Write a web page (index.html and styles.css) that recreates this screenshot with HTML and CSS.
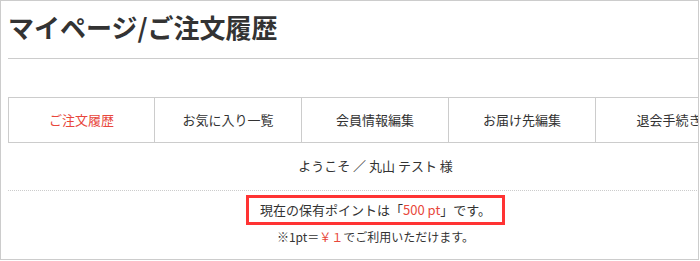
FILE: index.html
```html
<!DOCTYPE html>
<html lang="ja">
<head>
    <meta charset="UTF-8">
    <meta name="viewport" content="width=device-width, initial-scale=1.0">
    <title>マイページ/ご注文履歴</title>
    <link rel="stylesheet" href="styles.css">
</head>
<body>
    <div class="frame">
        <div class="page">
            <h1 class="page-title">マイページ/ご注文履歴</h1>

            <ul class="mypage-nav">
                <li class="active"><a href="#">ご注文履歴</a></li>
                <li><a href="#">お気に入り一覧</a></li>
                <li><a href="#">会員情報編集</a></li>
                <li><a href="#">お届け先編集</a></li>
                <li><a href="#">退会手続き</a></li>
            </ul>

            <div class="welcome">ようこそ ／ 丸山 テスト 様</div>

            <div class="point">
                <p class="point-box">現在の保有ポイントは「<span class="red">500 pt</span>」です。</p>
                <p class="point-note">※1pt＝<span class="red">￥１</span>でご利用いただけます。</p>
            </div>
        </div>
    </div>
</body>
</html>
```

FILE: styles.css
```css
body {
    margin: 0;
    font-family: "Noto Sans CJK JP", "Noto Sans", sans-serif;
    color: #333;
    background: #fff;
}
.frame {
    box-sizing: border-box;
    width: 699px;
    height: 260px;
    border: 1px solid #ccc;
    overflow: hidden;
}
.page {
    width: 735px;
    padding-left: 7px;
}
.page-title {
    margin: 8px 0 0;
    padding-bottom: 13px;
    font-size: 26px;
    line-height: 36px;
    font-weight: bold;
    border-bottom: 1px solid #ccc;
}
.mypage-nav {
    display: flex;
    margin: 38px 0 0;
    padding: 0;
    list-style: none;
    border-top: 1px solid #ccc;
    border-bottom: 1px solid #ccc;
    border-left: 1px solid #ccc;
}
.mypage-nav li {
    box-sizing: border-box;
    flex: 0 0 147px;
    border-right: 1px solid #ccc;
    text-align: center;
}
.mypage-nav li:first-child {
    flex-basis: 146px;
}
.mypage-nav a {
    display: block;
    line-height: 44px;
    font-size: 13px;
    color: #333;
    text-decoration: none;
}
.mypage-nav .active a {
    color: #e8473c;
}
.welcome {
    margin-top: 13px;
    padding-bottom: 14px;
    font-size: 13px;
    line-height: 20px;
    text-align: center;
    border-bottom: 1px dotted #ccc;
}
.point {
    text-align: center;
}
.point p {
    margin: 0;
}
.point-box {
    display: inline-block;
    margin-top: 4px !important;
    padding: 0 11px;
    border: 3px solid #f33;
    font-size: 13px;
    line-height: 24px;
}
.point-note {
    margin-top: 2px !important;
    font-size: 12px;
    line-height: 20px;
}
.red {
    color: #e8473c;
}
```
